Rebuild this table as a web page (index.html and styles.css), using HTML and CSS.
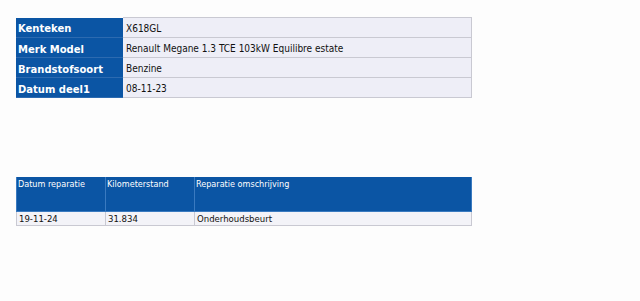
FILE: index.html
```html
<!DOCTYPE html>
<html lang="nl">
  <head>
    <meta charset="UTF-8" />
    <title>Voertuig</title>
    <link rel="stylesheet" href="styles.css">
  </head>
  <body>
    <table class="info">
      <tr><th>Kenteken</th><td>X618GL</td></tr>
      <tr><th>Merk Model</th><td>Renault Megane 1.3 TCE 103kW Equilibre estate</td></tr>
      <tr><th>Brandstofsoort</th><td>Benzine</td></tr>
      <tr><th>Datum deel1</th><td>08-11-23</td></tr>
    </table>

    <table class="history">
      <tr class="head">
        <th class="col-date">Datum reparatie</th>
        <th class="col-km">Kilometerstand</th>
        <th>Reparatie omschrijving</th>
      </tr>
      <tr class="row">
        <td>19-11-24</td>
        <td>31.834</td>
        <td>Onderhoudsbeurt</td>
      </tr>
    </table>
  </body>
</html>
```

FILE: styles.css
```css
* {
  margin: 0px;
  padding: 0px;
}
body {
  background-color: #fdfdfd;
  font-family: "DejaVu Sans", Verdana, sans-serif;
  padding: 17px 16px;
}
table {
  border-collapse: collapse;
  width: 456px;
}

/* voertuig gegevens */
.info tr {
  height: 20px;
}
.info th {
  background-color: #0b55a4;
  color: #fff;
  font-size: 10px;
  font-weight: bold;
  text-align: left;
  width: 103px;
  padding: 3px 2px 0px;
  border-bottom: 1px solid #2c6ab0;
  vertical-align: middle;
}
.info td {
  background-color: #eeeef7;
  font-family: "DejaVu Sans Condensed", sans-serif;
  font-size: 10px;
  color: #111;
  padding: 1px 3px 0px;
  border: 1px solid #c9c9d2;
  border-left: none;
  vertical-align: middle;
}

/* reparaties */
.history {
  margin-top: 79px;
}
.history .head {
  height: 34px;
}
.history .row {
  height: 14px;
}
.history th {
  background-color: #0b55a4;
  color: #fff;
  font-family: "DejaVu Sans Condensed", sans-serif;
  font-size: 9px;
  font-weight: normal;
  text-align: left;
  vertical-align: top;
  padding: 2px 1px;
  border: 1px solid #3a7ac0;
  border-top: none;
}
.history .col-date {
  width: 86px;
}
.history .col-km {
  width: 86px;
}
.history td {
  background-color: #f3f3f8;
  font-family: "DejaVu Sans Condensed", sans-serif;
  font-size: 9.5px;
  color: #111;
  padding: 0px 2px;
  border: 1px solid #c9c9d2;
}
```
